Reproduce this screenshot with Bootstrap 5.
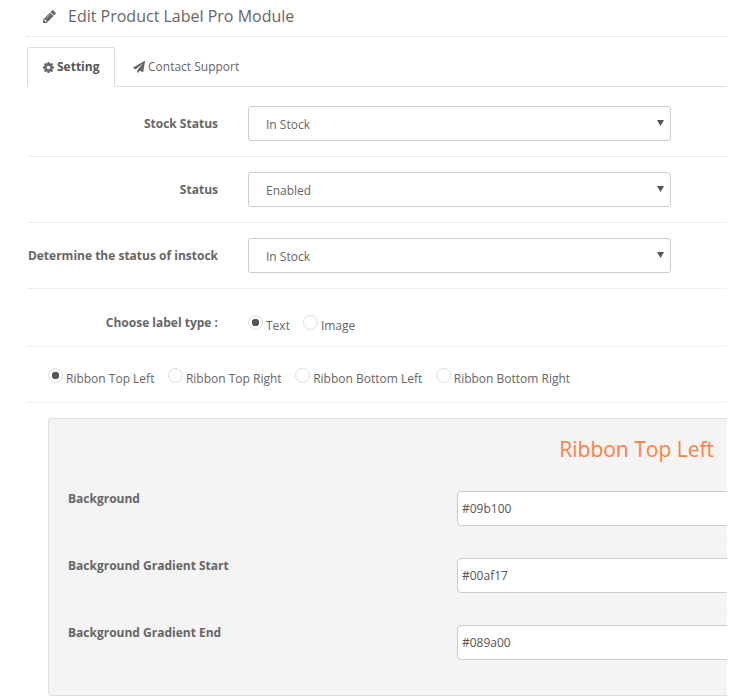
<!DOCTYPE html>
<html lang="en">
<head>
<meta charset="utf-8">
<title>Edit Product Label Pro Module</title>
<link rel="stylesheet" href="https://cdn.jsdelivr.net/npm/bootstrap@5.3.0/dist/css/bootstrap.min.css">
<style>
html,body{background:#fff;height:700px;overflow:hidden}
body{font-family:"Open Sans",sans-serif;font-size:12px;color:#666;}
.pg-clip{width:727px;height:700px;overflow:hidden;padding-left:27px}
.pg-head{height:37px;border-bottom:1px dotted #d5d9e0;padding:0 0 4px 15px;gap:11px}
.pg-head svg{width:15px;height:15px;fill:#666}
.pg-title{font-size:16px;color:#666;line-height:32px;margin-top:-1px}
.pg-tabs{margin-top:10px;height:40px;border-bottom:1px solid #ddd;flex-wrap:nowrap}
.pg-tabs .nav-link{font-size:12px;color:#666;height:40px;padding:0 14px;display:flex;align-items:center;gap:2px;border:1px solid transparent;border-radius:2px 2px 0 0;background:none}
.pg-tabs .nav-link.active{font-weight:700;color:#555;border-color:#ddd #ddd #fff;background:#fff;width:88px}
.pg-tabs .nav-item+.nav-item .nav-link{padding-left:17px;gap:3px}
.pg-tabs svg{width:13px;height:13px;fill:#666}
.pg-tabs .nav-item+.nav-item svg{width:12px;height:12px}
.pg-row{border-bottom:1px solid #eee;padding-top:15px;height:66px;align-items:flex-start;flex-wrap:nowrap}
.pg-first{height:70px;padding-top:19px}
.pg-label{width:191px;text-align:right;font-weight:700;color:#666;line-height:35px;flex:none;font-size:12px}
.pg-select{width:423px;height:35px;margin-left:30px;font-size:12px;color:#666;padding:2px 17px 0;border:1px solid #ccc;border-radius:3px;font-family:"Open Sans",sans-serif;background-size:7px 6px;background-position:right 6px top 13px;background-image:url("data:image/svg+xml,%3Csvg xmlns='http://www.w3.org/2000/svg' viewBox='0 0 7 6'%3E%3Cpath fill='%23555' d='M0 0h7L3.500 6z'/%3E%3C/svg%3E")}
.pg-radiorow{border-bottom:1px solid #eee;flex-wrap:nowrap}
.pg-type{height:58px}
.pg-type .pg-label{line-height:16px;margin-top:26px;height:16px}
.pg-opts{display:flex;align-items:flex-start}
.pg-type .pg-opts{margin:28px 0 0 30px}
.pg-ribbon{height:56px;padding:23px 0 0 21px}
.pg-opt{display:flex;margin-right:13.500px;line-height:17px;color:#666}
.pg-type .pg-opt{margin-right:13px}
.pg-radio{width:15px;height:15px;margin:0 3px 0 0;border:1px solid #ddd;background:#fff;flex:none;transform:translateY(-2px);float:none}
.pg-radio:checked{background:#fff;border-color:#ddd;background-image:radial-gradient(circle,#555 0 3.500px,transparent 4px)}
.pg-panel{margin:15px 0 0 21px;width:720px;height:278px;background:#f4f4f4;border:1px solid #ddd;border-radius:3px;padding:0 0 0 4px}
.pg-ptitle{font-size:21px;color:#ff7f3f;line-height:28px;padding:16px 0 0;width:661px;text-align:right;height:72px;margin:0}
.pg-prow{height:67px;padding-top:16px;border-bottom:1px solid #efefef;flex-wrap:nowrap}
.pg-prow:last-child{border-bottom:0}
.pg-plabel{width:404px;flex:none;padding-left:15px;font-weight:700;color:#666;line-height:16px}
.pg-input{width:300px;height:35px;font-size:12px;color:#555;padding:0 4px;border:1px solid #ccc;border-radius:4px;font-family:"Open Sans",sans-serif;flex:none}
.pg-pfirst{height:51px;padding-top:0}
</style>
</head>
<body>
<div class="pg-clip">
  <div class="pg-head d-flex align-items-center">
    <svg viewBox="0 0 1792 1792"><path d="M491 1536l91-91-235-235-91 91v107h128v128h107zm523-928q0-22-22-22-10 0-17 7l-542 542q-7 7-7 17 0 22 22 22 10 0 17-7l542-542q7-7 7-17zm-54-192l416 416-832 832h-416v-416zm683 96q0 53-37 90l-166 166-416-416 166-165q36-38 90-38 53 0 91 38l235 234q37 39 37 91z"/></svg>
    <span class="pg-title">Edit Product Label Pro Module</span>
  </div>
  <ul class="nav nav-tabs pg-tabs">
    <li class="nav-item"><a class="nav-link active" href="#"><svg viewBox="0 0 1792 1792"><path d="M1152 896q0-106-75-181t-181-75-181 75-75 181 75 181 181 75 181-75 75-181zm512-109v222q0 12-8 23t-20 13l-185 28q-19 54-39 91 35 50 107 138 10 12 10 25t-9 23q-27 37-99 108t-94 71q-12 0-26-9l-138-108q-44 23-91 38-16 136-29 186-7 28-36 28h-222q-14 0-24.500-8.500t-11.500-21.500l-28-184q-49-16-90-37l-141 107q-10 9-25 9-14 0-25-11-126-114-165-168-7-10-7-23 0-12 8-23 15-21 51-66.500t54-70.500q-27-50-41-99l-183-27q-13-2-21-12.500t-8-23.500v-222q0-12 8-23t19-13l186-28q14-46 39-92-40-57-107-138-10-12-10-24 0-10 9-23 26-36 98.500-107.500t94.500-71.500q13 0 26 10l138 107q44-23 91-38 16-136 29-186 7-28 36-28h222q14 0 24.500 8.500t11.500 21.500l28 184q49 16 90 37l142-107q9-9 24-9 13 0 25 10 129 119 165 170 7 8 7 22 0 12-8 23-15 21-51 66.500t-54 70.500q26 50 41 98l183 28q13 2 21 12.500t8 23.500z"/></svg>Setting</a></li>
    <li class="nav-item"><a class="nav-link" href="#"><svg viewBox="0 0 1792 1792"><path d="M1764 11q33 24 27 64l-256 1536q-5 29-32 45-14 8-31 8-11 0-24-5l-453-185-242 295q-18 23-49 23-13 0-22-4-19-7-30.500-23.500t-11.500-36.500v-349l864-1059-1069 925-395-162q-37-14-40-55-2-40 32-59l1664-960q15-9 32-9 20 0 36 11z"/></svg>Contact Support</a></li>
  </ul>
  <div class="d-flex pg-row pg-first">
    <label class="pg-label">Stock Status</label>
    <select class="form-select pg-select"><option>In Stock</option></select>
  </div>
  <div class="d-flex pg-row">
    <label class="pg-label">Status</label>
    <select class="form-select pg-select"><option>Enabled</option></select>
  </div>
  <div class="d-flex pg-row">
    <label class="pg-label">Determine the status of instock</label>
    <select class="form-select pg-select"><option>In Stock</option></select>
  </div>
  <div class="d-flex pg-radiorow pg-type">
    <label class="pg-label">Choose label type :</label>
    <div class="pg-opts">
      <label class="pg-opt"><input class="form-check-input pg-radio" type="radio" name="ltype" checked>Text</label>
      <label class="pg-opt"><input class="form-check-input pg-radio" type="radio" name="ltype">Image</label>
    </div>
  </div>
  <div class="pg-radiorow pg-ribbon">
    <div class="pg-opts">
      <label class="pg-opt"><input class="form-check-input pg-radio" type="radio" name="rib" checked>Ribbon Top Left</label>
      <label class="pg-opt"><input class="form-check-input pg-radio" type="radio" name="rib">Ribbon Top Right</label>
      <label class="pg-opt"><input class="form-check-input pg-radio" type="radio" name="rib">Ribbon Bottom Left</label>
      <label class="pg-opt"><input class="form-check-input pg-radio" type="radio" name="rib">Ribbon Bottom Right</label>
    </div>
  </div>
  <div class="pg-panel">
    <h3 class="pg-ptitle fw-normal">Ribbon Top Left</h3>
    <div class="d-flex pg-prow pg-pfirst"><label class="pg-plabel">Background</label><input class="form-control pg-input" type="text" value="#09b100"></div>
    <div class="d-flex pg-prow"><label class="pg-plabel">Background Gradient Start</label><input class="form-control pg-input" type="text" value="#00af17"></div>
    <div class="d-flex pg-prow"><label class="pg-plabel">Background Gradient End</label><input class="form-control pg-input" type="text" value="#089a00"></div>
  </div>
</div>
<script src="https://cdn.jsdelivr.net/npm/bootstrap@5.3.0/dist/js/bootstrap.bundle.min.js"></script>
</body>
</html>
